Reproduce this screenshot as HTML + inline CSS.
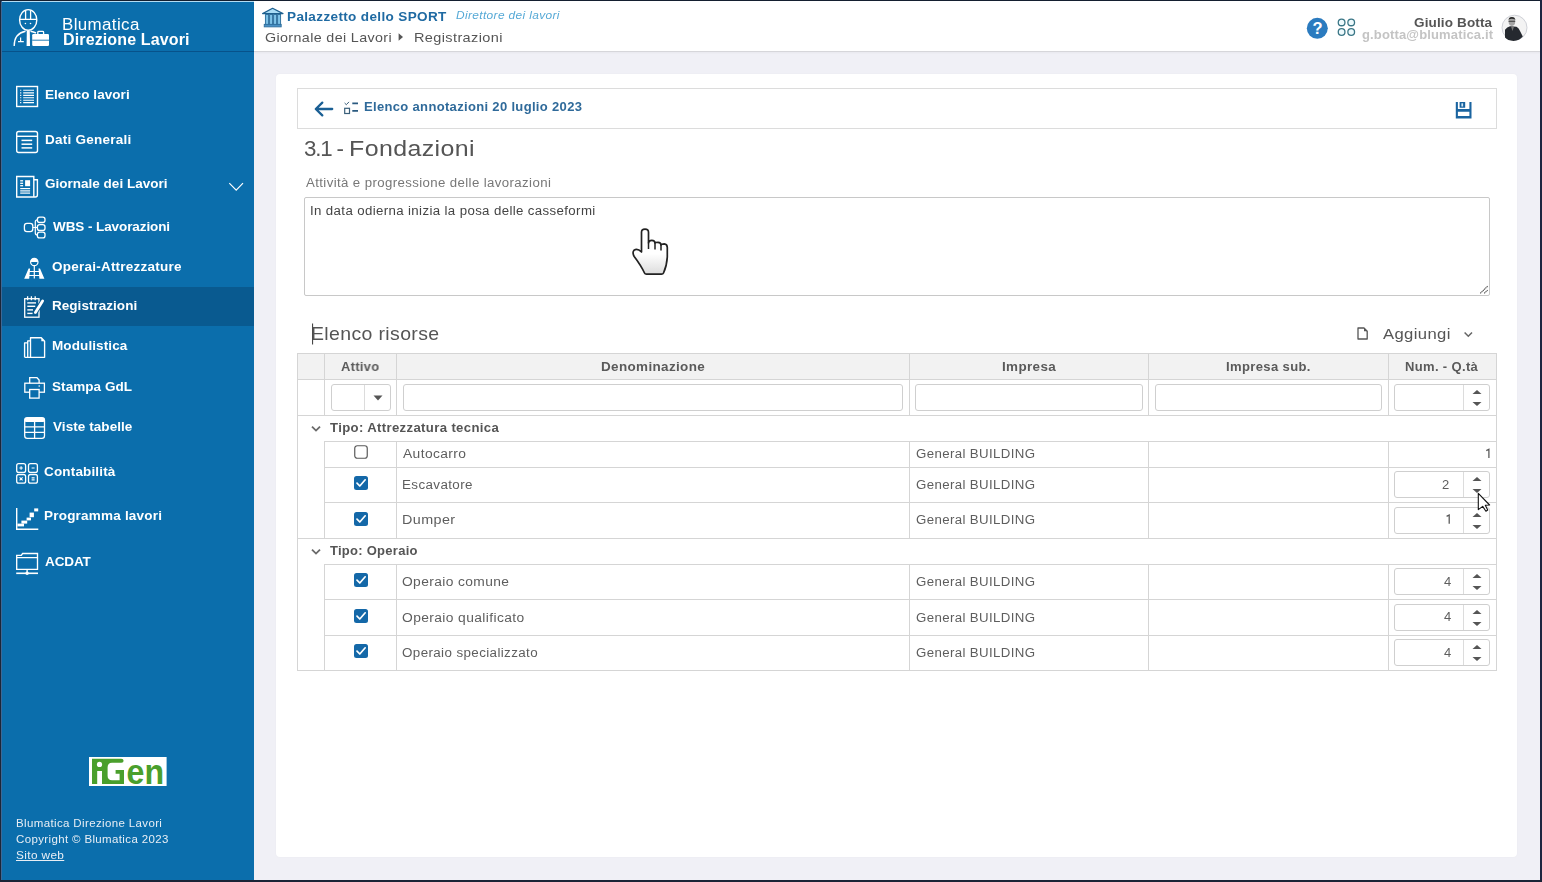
<!DOCTYPE html>
<html><head><meta charset="utf-8"><title>Blumatica Direzione Lavori</title>
<style>
html,body{margin:0;padding:0;}
body{width:1542px;height:882px;position:relative;overflow:hidden;background:#f0f0f6;font-family:"Liberation Sans", sans-serif;}
.tx{position:absolute;white-space:nowrap;line-height:1;will-change:transform;}
.abs{position:absolute;}
#side{position:absolute;left:0;top:0;width:254px;height:882px;background:#0b6eac;}
#sidehead{position:absolute;left:0;top:0;width:254px;height:51px;border-bottom:1px solid #07528a;}
#active{position:absolute;left:0;top:287px;width:254px;height:39px;background:#095a90;}
#topbar{position:absolute;left:254px;top:0;width:1288px;height:51px;background:#fff;border-bottom:1px solid #d6d6da;box-shadow:0 1px 2px rgba(0,0,0,0.04);}
#card{position:absolute;left:276px;top:74px;width:1241px;height:783px;background:#fff;border-radius:4px;box-shadow:0 0 2px rgba(0,0,0,0.04);}
#toolbar{position:absolute;left:297px;top:88px;width:1198px;height:39px;border:1px solid #dcdcdc;}
#ta{position:absolute;left:304px;top:197px;width:1184px;height:97px;border:1px solid #c8c8c8;border-radius:2px;}
.hl{position:absolute;height:1px;background:#d5d5d5;}
.vl{position:absolute;width:1px;background:#d5d5d5;}
.inp{position:absolute;border:1px solid #cfcfcf;border-radius:3px;background:#fff;box-sizing:border-box;}
.cb{position:absolute;width:14px;height:14px;box-sizing:border-box;border-radius:3px;}
.cb.off{border:1.5px solid #606060;background:#fff;}
.cb.on{background:#1468a8;}
.frame{position:absolute;background:#1c2230;}
</style></head><body>
<div id="side">
  <div id="sidehead"></div>
  <div id="active"></div>
</div>
<div id="topbar"></div>
<div id="card"></div>
<div id="toolbar"></div>
<div id="ta"></div>
<svg class="abs" style="left:0;top:0" width="1542" height="882" viewBox="0 0 1542 882"><ellipse cx="28.2" cy="19.9" rx="8.6" ry="10.3" stroke="#fff" fill="none" stroke-width="1.4"/><path d="M19.8 19.3 L36.6 19.3 M25.6 10.3 L25.6 19.3 M30.6 10.3 L30.6 19.3" stroke="#fff" fill="none" stroke-width="1.3"/><circle cx="25.4" cy="23.5" r="0.8" fill="#fff"/><circle cx="30.5" cy="23.5" r="0.8" fill="#fff"/><path d="M14.2 46 Q14.2 33.5 25.5 31.3 M30.5 31.3 Q33.5 31.8 36 33" stroke="#fff" fill="none" stroke-width="1.4"/><path d="M26.8 30.8 L29.8 30.8 L30 46 L26.6 46 Z" fill="#fff"/><path d="M20.6 37.6 L20.6 41.6 M18 41.6 L23.8 41.6" stroke="#fff" fill="none" stroke-width="1.2"/><rect x="32.2" y="34" width="16.8" height="12" rx="1.2" fill="#fff"/><path d="M32.2 40.2 L49 40.2" stroke="#0b6eac" stroke-width="0.9"/><path d="M37.8 34 L37.8 32.2 Q37.8 31.4 38.8 31.4 L42.6 31.4 Q43.6 31.4 43.6 32.2 L43.6 34" stroke="#fff" fill="none" stroke-width="1.3"/><rect x="16.7" y="86.5" width="20.8" height="20" stroke="#fff" fill="none" stroke-width="1.4"/><path d="M20.1 90.3 L21.3 90.3 M23.2 90.3 L34 90.3" stroke="#fff" fill="none" stroke-width="1.1"/><path d="M20.1 92.9 L21.3 92.9 M23.2 92.9 L34 92.9" stroke="#fff" fill="none" stroke-width="1.1"/><path d="M20.1 95.4 L21.3 95.4 M23.2 95.4 L34 95.4" stroke="#fff" fill="none" stroke-width="1.1"/><path d="M20.1 97.8 L21.3 97.8 M23.2 97.8 L34 97.8" stroke="#fff" fill="none" stroke-width="1.1"/><path d="M20.1 100.2 L21.3 100.2 M23.2 100.2 L34 100.2" stroke="#fff" fill="none" stroke-width="1.1"/><path d="M20.1 102.6 L21.3 102.6 M23.2 102.6 L34 102.6" stroke="#fff" fill="none" stroke-width="1.1"/><rect x="16.7" y="131.5" width="20.8" height="21" rx="2" stroke="#fff" fill="none" stroke-width="1.4"/><path d="M16.7 136.3 L37.5 136.3" stroke="#fff" fill="none" stroke-width="1.4"/><path d="M21.5 140.4 L32.2 140.4" stroke="#fff" fill="none" stroke-width="1.5"/><path d="M21.5 144.2 L32.2 144.2" stroke="#fff" fill="none" stroke-width="1.5"/><path d="M21.5 147.9 L32.2 147.9" stroke="#fff" fill="none" stroke-width="1.5"/><path d="M33.8 197 L16.7 197 L16.7 176.5 L33.8 176.5 L33.8 197 M33.8 179.7 L37.4 179.7 L37.4 195 Q37.4 197 35.4 197 L33.8 197" stroke="#fff" fill="none" stroke-width="1.4"/><path d="M20.2 180.8 L23.1 180.8" stroke="#fff" fill="none" stroke-width="1.3"/><path d="M20.2 183.3 L23.1 183.3" stroke="#fff" fill="none" stroke-width="1.3"/><path d="M20.2 185.7 L23.1 185.7" stroke="#fff" fill="none" stroke-width="1.3"/><rect x="25.1" y="180.2" width="5" height="6" fill="#fff"/><path d="M20.2 188.6 L30.1 188.6" stroke="#fff" fill="none" stroke-width="1.2"/><path d="M20.2 190.9 L30.1 190.9" stroke="#fff" fill="none" stroke-width="1.2"/><path d="M20.2 193.1 L30.1 193.1" stroke="#fff" fill="none" stroke-width="1.2"/><rect x="24.4" y="223.3" width="8.4" height="8.3" rx="2.6" stroke="#fff" fill="none" stroke-width="1.3"/><rect x="37.4" y="217.2" width="7.6" height="5.3" rx="2.2" stroke="#fff" fill="none" stroke-width="1.3"/><rect x="37.4" y="224.7" width="7.6" height="5.7" rx="2.2" stroke="#fff" fill="none" stroke-width="1.3"/><rect x="37.4" y="232.1" width="7.6" height="5.8" rx="2.2" stroke="#fff" fill="none" stroke-width="1.3"/><path d="M32.8 227.5 L37.4 227.5 M37.4 219.8 Q35.3 219.8 35.3 221.8 L35.3 233 Q35.3 235 37.4 235" stroke="#fff" fill="none" stroke-width="1.2"/><circle cx="34.3" cy="262" r="3.7" stroke="#fff" fill="none" stroke-width="1.2"/><path d="M30.6 262 A3.7 3.7 0 0 1 38 262 Z" fill="#fff"/><path d="M34.3 265.7 L34.3 278.6 M28.2 271.5 L40.4 271.5 M27.4 275.5 L41.2 275.5" stroke="#fff" fill="none" stroke-width="1.2"/><path d="M24.2 278.7 L28.6 268.6 L30.1 268.6 L29.2 278.7 Z M44.4 278.7 L40 268.6 L38.5 268.6 L39.4 278.7 Z" fill="#fff"/><rect x="24.7" y="298.7" width="14.3" height="18.5" stroke="#fff" fill="none" stroke-width="1.3"/><path d="M27.6 296.2 L27.6 300.2 M31.4 296.2 L31.4 300.2 M35.2 296.2 L35.2 300.2" stroke="#fff" fill="none" stroke-width="1.3"/><path d="M27.3 302.9 L36.0 302.9" stroke="#fff" fill="none" stroke-width="1.4"/><path d="M27.3 306.3 L35.2 306.3" stroke="#fff" fill="none" stroke-width="1.4"/><path d="M27.3 309.9 L33.0 309.9" stroke="#fff" fill="none" stroke-width="1.4"/><path d="M27.3 313.4 L32.6 313.4" stroke="#fff" fill="none" stroke-width="1.4"/><path d="M35.2 312.8 L42.9 300.6" stroke="#095a90" stroke-width="4.6" stroke-linecap="round"/><path d="M35.4 312.4 L42.6 301" stroke="#fff" stroke-width="2.8" stroke-linecap="round"/><path d="M34.6 314 L35 311.5 L36.6 312.6 Z" fill="#fff"/><path d="M24.6 357.3 L24.6 342.8 L27.7 342.8 M27.7 357.3 L27.7 340.8 L30.5 340.8 M30.5 357.3 L30.5 337.7 L41.3 337.7 L44.6 341.2 L44.6 357.3 Z M24.6 357.3 L44.6 357.3" stroke="#fff" fill="none" stroke-width="1.35" stroke-linejoin="round"/><path d="M41.3 337.7 L44.6 341.2 L41.3 341.2 Z" fill="#fff"/><path d="M29.7 383.2 L29.7 377.7 L37 377.7 L39.1 380 L39.1 383.2" stroke="#fff" fill="none" stroke-width="1.3"/><rect x="24.8" y="383.2" width="19.6" height="9" stroke="#fff" fill="none" stroke-width="1.3"/><rect x="29.7" y="389.5" width="9.4" height="8.6" fill="#0b6eac" stroke="#fff" stroke-width="1.3"/><circle cx="39.2" cy="386" r="0.8" fill="#fff"/><rect x="24.7" y="417.7" width="19.8" height="20.7" rx="2.6" stroke="#fff" fill="none" stroke-width="1.3"/><rect x="24.7" y="417.7" width="19.8" height="4.4" rx="1.5" fill="#fff"/><path d="M24.7 426.8 L44.5 426.8 M24.7 432.4 L44.5 432.4 M34.6 422 L34.6 438.4" stroke="#fff" fill="none" stroke-width="1.3"/><rect x="16.7" y="463.7" width="8.9" height="8.7" rx="2" stroke="#fff" fill="none" stroke-width="1.3"/><rect x="28.5" y="463.7" width="8.9" height="8.7" rx="2" stroke="#fff" fill="none" stroke-width="1.3"/><rect x="16.7" y="474.5" width="8.9" height="8.7" rx="2" stroke="#fff" fill="none" stroke-width="1.3"/><rect x="28.5" y="474.5" width="8.9" height="8.7" rx="2" stroke="#fff" fill="none" stroke-width="1.3"/><path d="M19.4 468 L22.8 468 M21.1 466.3 L21.1 469.7 M31.6 468 L34.6 468 M19.6 477.3 L22.6 480.4 M22.6 477.3 L19.6 480.4 M31.6 477.9 L34.6 477.9 M31.6 479.9 L34.6 479.9" stroke="#fff" fill="none" stroke-width="1.1"/><path d="M16.7 508 L16.7 529.3 L38.3 529.3" stroke="#fff" fill="none" stroke-width="1.4"/><rect x="17.4" y="523.6" width="6.6" height="2.8" fill="#fff"/><rect x="21.4" y="520.6" width="5.8" height="3.0" fill="#fff"/><rect x="26.6" y="517.6" width="4.4" height="2.8" fill="#fff"/><rect x="29.6" y="512.6" width="4.3" height="4.6" fill="#fff"/><rect x="34.2" y="508.4" width="4.0" height="3.0" fill="#fff"/><path d="M16.7 569.4 L16.7 555.4 L21.3 555.4 L22.6 553.5 L37.5 553.5 L37.5 569.4 Z M16.7 557.6 L37.5 557.6 M27.1 569.4 L27.1 572.6" stroke="#fff" fill="none" stroke-width="1.35"/><path d="M16.2 573.3 L38 573.3" stroke="#fff" fill="none" stroke-width="1.6"/><circle cx="27.1" cy="573.3" r="1.7" fill="#fff"/><path d="M229.3 183.2 L236.2 190.2 L243 183.2" stroke="#fff" fill="none" stroke-width="1.2"/><rect x="89" y="757" width="77.6" height="29" fill="#fff"/><path d="M92 758.8 L121.2 758.8 Q123.6 758.8 123.6 760.8 Q123.6 762.8 121.4 762.8 L112 762.8 Q107.6 762.8 107.6 767.5 L107.6 775.8 Q107.6 780.2 112 780.2 L119.6 780.2 L119.6 773.8 L115.6 773.8 L115.6 770 L124 770 L124 784 L92 784 Z" fill="#4a9f2c"/><circle cx="99.5" cy="764.4" r="2.6" fill="#fff"/><rect x="97.2" y="771" width="4.8" height="13.2" fill="#fff"/><text x="126.6" y="784" font-family="Liberation Sans" font-weight="700" font-size="35.5" fill="#4a9f2c" textLength="37.5" lengthAdjust="spacingAndGlyphs">en</text><path d="M262.6 13.6 L272.6 8.3 L283 13.6 Z" fill="#a9dcf5" stroke="#1d5f8e" stroke-width="1.2" stroke-linejoin="round"/><rect x="264.8" y="14" width="16" height="11" fill="#bfe6f8"/><rect x="265.6" y="14.5" width="3" height="10.3" fill="#7ec3e8" stroke="#2a6a98" stroke-width="0.9"/><rect x="269.6" y="14.5" width="3" height="10.3" fill="#7ec3e8" stroke="#2a6a98" stroke-width="0.9"/><rect x="273.6" y="14.5" width="3" height="10.3" fill="#7ec3e8" stroke="#2a6a98" stroke-width="0.9"/><rect x="277.6" y="14.5" width="3" height="10.3" fill="#7ec3e8" stroke="#2a6a98" stroke-width="0.9"/><rect x="264.2" y="24.3" width="17" height="2.6" fill="#4a90c4" stroke="#2a6a98" stroke-width="0.8"/><circle cx="1317.3" cy="28.3" r="10.5" fill="#2b7bbf"/><text x="1317.5" y="34" text-anchor="middle" font-family="Liberation Sans" font-weight="700" font-size="16.5" fill="#fff">?</text><circle cx="1341.6" cy="22.4" r="3.35" fill="#eefafd" stroke="#3a7686" stroke-width="1.3"/><circle cx="1351.2" cy="22.4" r="3.35" fill="#eefafd" stroke="#3a7686" stroke-width="1.3"/><circle cx="1341.6" cy="32.0" r="3.35" fill="#eefafd" stroke="#3a7686" stroke-width="1.3"/><circle cx="1351.2" cy="32.0" r="3.35" fill="#eefafd" stroke="#3a7686" stroke-width="1.3"/><circle cx="1514.5" cy="27.7" r="12.5" fill="#f3f3f3" stroke="#c9ccd2" stroke-width="0.9"/><path d="M1505 29.8 Q1507 26.8 1510 26.2 L1516.5 26.8 Q1519 28 1520 31 L1522.8 36.5 Q1519.5 40.6 1513.5 40.9 Q1507.5 40.6 1505 37.5 Z" fill="#25292f"/><ellipse cx="1511.9" cy="21.6" rx="3.3" ry="4.3" fill="#a4a4a4"/><path d="M1508.5 20.3 Q1508.6 16.9 1511.9 16.9 Q1515.2 16.9 1515.4 20.3 L1514.6 19.2 Q1511.9 18.2 1509.2 19.2 Z" fill="#2a2a2a"/><path d="M1508.6 21.3 L1515.2 21.3" stroke="#333" stroke-width="0.9"/><path d="M1511 26.5 L1512.5 31 L1514 26.8" fill="#777"/><path d="M332.2 109 L316 109 M322.3 102.6 L315.8 109 L322.3 115.4" stroke="#1a5f94" stroke-width="2.3" fill="none" stroke-linecap="round" stroke-linejoin="round"/><path d="M344.6 103 L346.3 104.7 L349 101.9" stroke="#3a5f7a" stroke-width="1" fill="none"/><rect x="344.7" y="108.3" width="4.8" height="5.2" stroke="#3a5f7a" stroke-width="1.2" fill="none"/><path d="M352.3 103.4 L358 103.4 M352.3 110.9 L358 110.9" stroke="#2a5a80" stroke-width="1.7"/><path d="M1455.8 102 H1457.9 V118.6 H1455.8 Z M1469.4 102 H1471.5 V118.6 H1469.4 Z M1455.8 109 H1471.5 V111.8 H1455.8 Z M1455.8 116.1 H1471.5 V118.6 H1455.8 Z M1459.6 102 H1465.2 V107.7 H1459.6 Z" fill="#1a64a0"/><rect x="1461.4" y="103.3" width="1.7" height="3.2" fill="#d5ebf7"/><path d="M1358 328 L1364 328 L1367.2 331.3 L1367.2 339 L1358 339 Z" stroke="#555" stroke-width="1.3" fill="none" stroke-linejoin="round"/><path d="M1364 328 L1367.2 331.3 L1364 331.3 Z" fill="#555"/><path d="M1464.6 332.4 L1468.3 336.2 L1472 332.4" stroke="#666" stroke-width="1.5" fill="none"/><path d="M1480.3 293.3 L1487.6 286.2 M1484.3 293.3 L1487.6 290.1" stroke="#4a4a4a" stroke-width="1.1" stroke-dasharray="1.2 0.6"/><path d="M312.6 323.5 L312.6 344.5" stroke="#333" stroke-width="1"/></svg>
<div class="abs" style="left:298px;top:354px;width:1198px;height:25px;background:#f2f2f2"></div>
<div class="hl" style="left:297px;width:1200px;top:353px;background:#d5d5d5"></div>
<div class="hl" style="left:297px;width:1200px;top:379px;background:#d5d5d5"></div>
<div class="hl" style="left:297px;width:1200px;top:415px;background:#d5d5d5"></div>
<div class="hl" style="left:297px;width:1200px;top:538px;background:#d5d5d5"></div>
<div class="hl" style="left:297px;width:1200px;top:670px;background:#d5d5d5"></div>
<div class="hl" style="left:324px;width:1173px;top:441px;background:#d5d5d5"></div>
<div class="hl" style="left:324px;width:1173px;top:467px;background:#d5d5d5"></div>
<div class="hl" style="left:324px;width:1173px;top:502px;background:#d5d5d5"></div>
<div class="hl" style="left:324px;width:1173px;top:564px;background:#d5d5d5"></div>
<div class="hl" style="left:324px;width:1173px;top:599px;background:#d5d5d5"></div>
<div class="hl" style="left:324px;width:1173px;top:635px;background:#d5d5d5"></div>
<div class="vl" style="left:297px;height:318px;top:353px;background:#d5d5d5"></div>
<div class="vl" style="left:1496px;height:318px;top:353px;background:#d5d5d5"></div>
<div class="vl" style="left:324px;height:63px;top:353px;background:#d5d5d5"></div>
<div class="vl" style="left:324px;height:98px;top:441px;background:#d5d5d5"></div>
<div class="vl" style="left:324px;height:107px;top:564px;background:#d5d5d5"></div>
<div class="vl" style="left:396px;height:63px;top:353px;background:#d5d5d5"></div>
<div class="vl" style="left:396px;height:98px;top:441px;background:#d5d5d5"></div>
<div class="vl" style="left:396px;height:107px;top:564px;background:#d5d5d5"></div>
<div class="vl" style="left:909px;height:63px;top:353px;background:#d5d5d5"></div>
<div class="vl" style="left:909px;height:98px;top:441px;background:#d5d5d5"></div>
<div class="vl" style="left:909px;height:107px;top:564px;background:#d5d5d5"></div>
<div class="vl" style="left:1148px;height:63px;top:353px;background:#d5d5d5"></div>
<div class="vl" style="left:1148px;height:98px;top:441px;background:#d5d5d5"></div>
<div class="vl" style="left:1148px;height:107px;top:564px;background:#d5d5d5"></div>
<div class="vl" style="left:1388px;height:63px;top:353px;background:#d5d5d5"></div>
<div class="vl" style="left:1388px;height:98px;top:441px;background:#d5d5d5"></div>
<div class="vl" style="left:1388px;height:107px;top:564px;background:#d5d5d5"></div>
<div class="inp" style="left:331.0px;top:384.0px;width:60.0px;height:27.0px;"></div>
<div class="abs" style="left:364px;top:385px;width:1px;height:25px;background:#dcdcdc"></div>
<svg class="abs" style="left:372px;top:394px" width="12" height="8"><path d="M1.5 1.5 L10.5 1.5 L6 6.5 Z" fill="#555"/></svg>
<div class="inp" style="left:403.0px;top:384.0px;width:500.0px;height:27.0px;"></div>
<div class="inp" style="left:915.0px;top:384.0px;width:228.0px;height:27.0px;"></div>
<div class="inp" style="left:1155.0px;top:384.0px;width:227.0px;height:27.0px;"></div>
<div class="inp" style="left:1394.0px;top:384.0px;width:96.0px;height:27.0px;"></div>
<div class="abs" style="left:1463px;top:385.0px;width:1px;height:25.0px;background:#dcdcdc"></div>
<svg class="abs" style="left:1471px;top:388.9px" width="12" height="6"><path d="M1.5 5 L10.5 5 L6 1 Z" fill="#555"/></svg>
<svg class="abs" style="left:1471px;top:401.2px" width="12" height="6"><path d="M1.5 1 L10.5 1 L6 5 Z" fill="#555"/></svg>
<div class="inp" style="left:1394.0px;top:471.0px;width:96.0px;height:27.0px;"></div>
<div class="abs" style="left:1463px;top:472.0px;width:1px;height:25.0px;background:#dcdcdc"></div>
<svg class="abs" style="left:1471px;top:475.9px" width="12" height="6"><path d="M1.5 5 L10.5 5 L6 1 Z" fill="#555"/></svg>
<svg class="abs" style="left:1471px;top:488.2px" width="12" height="6"><path d="M1.5 1 L10.5 1 L6 5 Z" fill="#555"/></svg>
<div class="inp" style="left:1394.0px;top:507.0px;width:96.0px;height:27.0px;"></div>
<div class="abs" style="left:1463px;top:508.0px;width:1px;height:25.0px;background:#dcdcdc"></div>
<svg class="abs" style="left:1471px;top:511.9px" width="12" height="6"><path d="M1.5 5 L10.5 5 L6 1 Z" fill="#555"/></svg>
<svg class="abs" style="left:1471px;top:524.2px" width="12" height="6"><path d="M1.5 1 L10.5 1 L6 5 Z" fill="#555"/></svg>
<div class="inp" style="left:1394.0px;top:568.0px;width:96.0px;height:27.0px;"></div>
<div class="abs" style="left:1463px;top:569.0px;width:1px;height:25.0px;background:#dcdcdc"></div>
<svg class="abs" style="left:1471px;top:572.9px" width="12" height="6"><path d="M1.5 5 L10.5 5 L6 1 Z" fill="#555"/></svg>
<svg class="abs" style="left:1471px;top:585.2px" width="12" height="6"><path d="M1.5 1 L10.5 1 L6 5 Z" fill="#555"/></svg>
<div class="inp" style="left:1394.0px;top:604.0px;width:96.0px;height:27.0px;"></div>
<div class="abs" style="left:1463px;top:605.0px;width:1px;height:25.0px;background:#dcdcdc"></div>
<svg class="abs" style="left:1471px;top:608.9px" width="12" height="6"><path d="M1.5 5 L10.5 5 L6 1 Z" fill="#555"/></svg>
<svg class="abs" style="left:1471px;top:621.2px" width="12" height="6"><path d="M1.5 1 L10.5 1 L6 5 Z" fill="#555"/></svg>
<div class="inp" style="left:1394.0px;top:639.0px;width:96.0px;height:27.0px;"></div>
<div class="abs" style="left:1463px;top:640.0px;width:1px;height:25.0px;background:#dcdcdc"></div>
<svg class="abs" style="left:1471px;top:643.9px" width="12" height="6"><path d="M1.5 5 L10.5 5 L6 1 Z" fill="#555"/></svg>
<svg class="abs" style="left:1471px;top:656.2px" width="12" height="6"><path d="M1.5 1 L10.5 1 L6 5 Z" fill="#555"/></svg>
<svg class="abs" style="left:354px;top:445.0px" width="14" height="14"><rect x="0.75" y="0.75" width="12.5" height="12.5" rx="2.5" fill="#fff" stroke="#5a5a5a" stroke-width="1.2"/></svg>
<svg class="abs" style="left:354px;top:476.0px" width="14" height="14"><rect x="0" y="0" width="14" height="14" rx="2.5" fill="#1468a8"/><path d="M3 7.2 L5.8 10 L11.2 3.8" stroke="#fff" stroke-width="1.7" fill="none" stroke-linecap="round" stroke-linejoin="round"/></svg>
<svg class="abs" style="left:354px;top:511.5px" width="14" height="14"><rect x="0" y="0" width="14" height="14" rx="2.5" fill="#1468a8"/><path d="M3 7.2 L5.8 10 L11.2 3.8" stroke="#fff" stroke-width="1.7" fill="none" stroke-linecap="round" stroke-linejoin="round"/></svg>
<svg class="abs" style="left:354px;top:573.0px" width="14" height="14"><rect x="0" y="0" width="14" height="14" rx="2.5" fill="#1468a8"/><path d="M3 7.2 L5.8 10 L11.2 3.8" stroke="#fff" stroke-width="1.7" fill="none" stroke-linecap="round" stroke-linejoin="round"/></svg>
<svg class="abs" style="left:354px;top:608.5px" width="14" height="14"><rect x="0" y="0" width="14" height="14" rx="2.5" fill="#1468a8"/><path d="M3 7.2 L5.8 10 L11.2 3.8" stroke="#fff" stroke-width="1.7" fill="none" stroke-linecap="round" stroke-linejoin="round"/></svg>
<svg class="abs" style="left:354px;top:644.0px" width="14" height="14"><rect x="0" y="0" width="14" height="14" rx="2.5" fill="#1468a8"/><path d="M3 7.2 L5.8 10 L11.2 3.8" stroke="#fff" stroke-width="1.7" fill="none" stroke-linecap="round" stroke-linejoin="round"/></svg>
<svg class="abs" style="left:310px;top:425px" width="12" height="8"><path d="M2 1.6 L6 5.6 L10 1.6" stroke="#6a6a6a" stroke-width="1.8" fill="none"/></svg>
<svg class="abs" style="left:310px;top:548px" width="12" height="8"><path d="M2 1.6 L6 5.6 L10 1.6" stroke="#6a6a6a" stroke-width="1.8" fill="none"/></svg>
<div class="tx" id="t_blum" style="left:62.40px;top:17.36px;font-size:16px;font-weight:400;color:#ffffff;letter-spacing:0.350px;transform:scaleX(1.0585);transform-origin:0 0;">Blumatica</div>
<div class="tx" id="t_dl" style="left:62.50px;top:32.26px;font-size:16px;font-weight:700;color:#ffffff;letter-spacing:0.133px;">Direzione Lavori</div>
<div class="tx" id="m0" style="left:44.50px;top:88.07px;font-size:13.5px;font-weight:700;color:#ffffff;letter-spacing:0.050px;">Elenco lavori</div>
<div class="tx" id="m1" style="left:44.50px;top:132.77px;font-size:13.5px;font-weight:700;color:#ffffff;letter-spacing:0.250px;">Dati Generali</div>
<div class="tx" id="m2" style="left:44.50px;top:177.47px;font-size:13.5px;font-weight:700;color:#ffffff;letter-spacing:0.011px;">Giornale dei Lavori</div>
<div class="tx" id="s0" style="left:53.00px;top:219.77px;font-size:13.5px;font-weight:700;color:#ffffff;letter-spacing:-0.087px;">WBS - Lavorazioni</div>
<div class="tx" id="s1" style="left:52.00px;top:259.57px;font-size:13.5px;font-weight:700;color:#ffffff;letter-spacing:0.233px;">Operai-Attrezzature</div>
<div class="tx" id="s2" style="left:52.00px;top:299.17px;font-size:13.5px;font-weight:700;color:#ffffff;letter-spacing:0.033px;">Registrazioni</div>
<div class="tx" id="s3" style="left:52.00px;top:339.37px;font-size:13.5px;font-weight:700;color:#ffffff;letter-spacing:0.100px;">Modulistica</div>
<div class="tx" id="s4" style="left:52.00px;top:379.57px;font-size:13.5px;font-weight:700;color:#ffffff;letter-spacing:0.067px;">Stampa GdL</div>
<div class="tx" id="s5" style="left:53.00px;top:419.57px;font-size:13.5px;font-weight:700;color:#ffffff;letter-spacing:0.067px;">Viste tabelle</div>
<div class="tx" id="n0" style="left:44.20px;top:464.87px;font-size:13.5px;font-weight:700;color:#ffffff;letter-spacing:0.160px;">Contabilità</div>
<div class="tx" id="n1" style="left:44.20px;top:509.37px;font-size:13.5px;font-weight:700;color:#ffffff;letter-spacing:0.213px;">Programma lavori</div>
<div class="tx" id="n2" style="left:45.20px;top:554.57px;font-size:13.5px;font-weight:700;color:#ffffff;letter-spacing:-0.100px;">ACDAT</div>
<div class="tx" id="f0" style="left:15.65px;top:818.29px;font-size:11px;font-weight:400;color:#e8eef5;letter-spacing:0.350px;transform:scaleX(1.0454);transform-origin:0 0;">Blumatica Direzione Lavori</div>
<div class="tx" id="f1" style="left:15.65px;top:833.59px;font-size:11px;font-weight:400;color:#e8eef5;letter-spacing:0.350px;transform:scaleX(1.0446);transform-origin:0 0;">Copyright © Blumatica 2023</div>
<div class="tx" id="f2" style="left:15.71px;top:849.59px;font-size:11px;font-weight:400;color:#e8eef5;letter-spacing:0.350px;transform:scaleX(1.0725);transform-origin:0 0;text-decoration:underline;">Sito web</div>
<div class="tx" id="h_pal" style="left:286.99px;top:9.87px;font-size:13.5px;font-weight:700;color:#1f6aa2;letter-spacing:0.350px;transform:scaleX(1.0029);transform-origin:0 0;">Palazzetto dello SPORT</div>
<div class="tx" id="h_dir" style="left:456.21px;top:10.07px;font-size:11.5px;font-weight:400;color:#55a9d6;letter-spacing:0.350px;transform:scaleX(1.0353);transform-origin:0 0;font-style:italic;">Direttore dei lavori</div>
<div class="tx" id="h_gdl" style="left:264.85px;top:30.87px;font-size:13.5px;font-weight:400;color:#555;letter-spacing:0.350px;transform:scaleX(1.0589);transform-origin:0 0;">Giornale dei Lavori</div>
<div class="tx" id="h_reg" style="left:414.38px;top:30.87px;font-size:13.5px;font-weight:400;color:#555;letter-spacing:0.350px;transform:scaleX(1.0748);transform-origin:0 0;">Registrazioni</div>
<div class="tx" id="h_user" style="left:1414.10px;top:15.77px;font-size:13.5px;font-weight:700;color:#555;letter-spacing:0.145px;">Giulio Botta</div>
<div class="tx" id="h_mail" style="left:1362.00px;top:27.70px;font-size:13px;font-weight:700;color:#c4c4c4;letter-spacing:0.147px;">g.botta@blumatica.it</div>
<div class="tx" id="c_ann" style="left:364.10px;top:100.10px;font-size:13px;font-weight:700;color:#2f6a9a;letter-spacing:0.331px;">Elenco annotazioni 20 luglio 2023</div>
<div class="tx" id="c_title" style="left:303.70px;top:137.92px;font-size:22.3px;font-weight:400;color:#555;letter-spacing:-1.200px;">3.1 -</div>
<div class="tx" id="c_title2" style="left:348.74px;top:137.92px;font-size:22.3px;font-weight:400;color:#555;letter-spacing:0.350px;transform:scaleX(1.1189);transform-origin:0 0;">Fondazioni</div>
<div class="tx" id="c_lab" style="left:305.69px;top:177.44px;font-size:12px;font-weight:400;color:#777;letter-spacing:0.350px;transform:scaleX(1.1023);transform-origin:0 0;">Attività e progressione delle lavorazioni</div>
<div class="tx" id="c_ta" style="left:309.86px;top:204.52px;font-size:12.5px;font-weight:400;color:#444;letter-spacing:0.350px;transform:scaleX(1.0603);transform-origin:0 0;">In data odierna inizia la posa delle casseformi</div>
<div class="tx" id="c_ris" style="left:310.73px;top:324.94px;font-size:18.5px;font-weight:400;color:#555;letter-spacing:0.350px;transform:scaleX(1.0523);transform-origin:0 0;">Elenco risorse</div>
<div class="tx" id="c_agg" style="left:1383.00px;top:326.08px;font-size:15.5px;font-weight:400;color:#555;letter-spacing:0.350px;transform:scaleX(1.0740);transform-origin:0 0;">Aggiungi</div>
<div class="tx" id="th0" style="left:341.40px;top:359.70px;font-size:13px;font-weight:700;color:#5a5a5a;letter-spacing:0.350px;transform:scaleX(0.9860);transform-origin:0 0;">Attivo</div>
<div class="tx" id="th1" style="left:600.96px;top:359.70px;font-size:13px;font-weight:700;color:#5a5a5a;letter-spacing:0.350px;transform:scaleX(1.0347);transform-origin:0 0;">Denominazione</div>
<div class="tx" id="th2" style="left:1001.97px;top:359.70px;font-size:13px;font-weight:700;color:#5a5a5a;letter-spacing:0.350px;transform:scaleX(1.0333);transform-origin:0 0;">Impresa</div>
<div class="tx" id="th3" style="left:1226.19px;top:359.70px;font-size:13px;font-weight:700;color:#5a5a5a;letter-spacing:0.350px;transform:scaleX(1.0043);transform-origin:0 0;">Impresa sub.</div>
<div class="tx" id="th4" style="left:1405.19px;top:359.70px;font-size:13px;font-weight:700;color:#5a5a5a;letter-spacing:0.350px;transform:scaleX(0.9960);transform-origin:0 0;">Num. - Q.tà</div>
<div class="tx" id="g0" style="left:329.70px;top:421.30px;font-size:13px;font-weight:700;color:#555;letter-spacing:0.350px;transform:scaleX(1.0111);transform-origin:0 0;">Tipo: Attrezzatura tecnica</div>
<div class="tx" id="g1" style="left:329.70px;top:544.30px;font-size:13px;font-weight:700;color:#555;letter-spacing:0.267px;">Tipo: Operaio</div>
<div class="tx" id="r0" style="left:403.45px;top:448.02px;font-size:12.5px;font-weight:400;color:#5e5e5e;letter-spacing:0.350px;transform:scaleX(1.1057);transform-origin:0 0;">Autocarro</div>
<div class="tx" id="rb0" style="left:915.55px;top:448.02px;font-size:12.5px;font-weight:400;color:#5e5e5e;letter-spacing:0.350px;transform:scaleX(1.0612);transform-origin:0 0;">General BUILDING</div>
<div class="tx" id="r1" style="left:402.40px;top:479.02px;font-size:12.5px;font-weight:400;color:#5e5e5e;letter-spacing:0.350px;transform:scaleX(1.0725);transform-origin:0 0;">Escavatore</div>
<div class="tx" id="rb1" style="left:915.55px;top:479.02px;font-size:12.5px;font-weight:400;color:#5e5e5e;letter-spacing:0.350px;transform:scaleX(1.0612);transform-origin:0 0;">General BUILDING</div>
<div class="tx" id="r2" style="left:402.25px;top:514.02px;font-size:12.5px;font-weight:400;color:#5e5e5e;letter-spacing:0.350px;transform:scaleX(1.1489);transform-origin:0 0;">Dumper</div>
<div class="tx" id="rb2" style="left:915.55px;top:514.02px;font-size:12.5px;font-weight:400;color:#5e5e5e;letter-spacing:0.350px;transform:scaleX(1.0612);transform-origin:0 0;">General BUILDING</div>
<div class="tx" id="r3" style="left:402.34px;top:576.22px;font-size:12.5px;font-weight:400;color:#5e5e5e;letter-spacing:0.350px;transform:scaleX(1.1031);transform-origin:0 0;">Operaio comune</div>
<div class="tx" id="rb3" style="left:915.55px;top:576.22px;font-size:12.5px;font-weight:400;color:#5e5e5e;letter-spacing:0.350px;transform:scaleX(1.0612);transform-origin:0 0;">General BUILDING</div>
<div class="tx" id="r4" style="left:402.35px;top:611.62px;font-size:12.5px;font-weight:400;color:#5e5e5e;letter-spacing:0.350px;transform:scaleX(1.1052);transform-origin:0 0;">Operaio qualificato</div>
<div class="tx" id="rb4" style="left:915.55px;top:611.62px;font-size:12.5px;font-weight:400;color:#5e5e5e;letter-spacing:0.350px;transform:scaleX(1.0612);transform-origin:0 0;">General BUILDING</div>
<div class="tx" id="r5" style="left:402.39px;top:647.02px;font-size:12.5px;font-weight:400;color:#5e5e5e;letter-spacing:0.350px;transform:scaleX(1.0720);transform-origin:0 0;">Operaio specializzato</div>
<div class="tx" id="rb5" style="left:915.55px;top:647.02px;font-size:12.5px;font-weight:400;color:#5e5e5e;letter-spacing:0.350px;transform:scaleX(1.0612);transform-origin:0 0;">General BUILDING</div>
<div class="tx" id="q0" style="left:1442.40px;top:478.00px;font-size:13px;font-weight:400;color:#5e5e5e;letter-spacing:0.000px;">2</div>
<div class="tx" id="q1" style="left:1443.60px;top:575.00px;font-size:13px;font-weight:400;color:#5e5e5e;letter-spacing:0.000px;">4</div>
<div class="tx" id="q2" style="left:1443.60px;top:610.40px;font-size:13px;font-weight:400;color:#5e5e5e;letter-spacing:0.000px;">4</div>
<div class="tx" id="q3" style="left:1443.60px;top:645.80px;font-size:13px;font-weight:400;color:#5e5e5e;letter-spacing:0.000px;">4</div>
<svg class="abs" style="left:0;top:0" width="1542" height="882" viewBox="0 0 1542 882"><defs><linearGradient id="hg" x1="0" y1="0" x2="0" y2="1"><stop offset="0.55" stop-color="#fff"/><stop offset="1" stop-color="#dcdcdc"/></linearGradient></defs><path d="M641.5 252 L641.5 232.2 Q641.5 229.1 645 229.1 Q648.5 229.1 648.5 232.2 L648.5 242.8 Q648.8 240.3 651.8 240.3 Q655 240.3 655 243 Q655.3 242.3 658 242.3 Q661 242.5 661 245 Q661.5 243.8 664.2 243.8 Q667.3 244 667.3 247.5 L667.3 257 Q666.8 266 663.5 273 Q663 274.2 661.5 274.2 L646.5 274.2 Q645 274.2 644.5 273 Q641 265.5 634.2 256.5 Q632 252.5 634 250.2 Q637.5 248 641.5 252 Z" fill="url(#hg)" stroke="#222" stroke-width="1.7" stroke-linejoin="round"/><path d="M648.5 242.5 L648.5 249 M655 243 L655 249.5 M661 245 L661 250.5" stroke="#222" stroke-width="1.5"/><path d="M1478.3 493.3 L1478.3 509.6 L1482.7 506.4 L1485.9 511.2 L1487.7 510 L1485.3 505.2 L1489.6 505 Z" fill="#fff" stroke="#111" stroke-width="1.1" stroke-linejoin="round"/><path d="M1486.3 450.6 L1488.9 449.2 L1488.9 458" stroke="#555" stroke-width="1.25" fill="none"/><path d="M1446.6 516.4 L1449.2 515 L1449.2 523.8" stroke="#555" stroke-width="1.25" fill="none"/><path d="M398.6 33.3 L403 37 L398.6 40.7 Z" fill="#555"/></svg><div class="frame" style="left:0;top:1px;width:254px;height:1px;background:#b3ddf4"></div><div class="frame" style="left:1px;top:1px;width:1px;height:880px;background:#3f6894"></div><div class="frame" style="left:0;top:0;width:1542px;height:1px;background:#141f30"></div><div class="frame" style="left:0;top:0;width:1px;height:882px;background:#1b2538"></div><div class="frame" style="left:1540px;top:0;width:2px;height:882px;background:#1d2640"></div><div class="frame" style="left:0;top:880px;width:1542px;height:2px;background:#1a2336"></div>
</body></html>
